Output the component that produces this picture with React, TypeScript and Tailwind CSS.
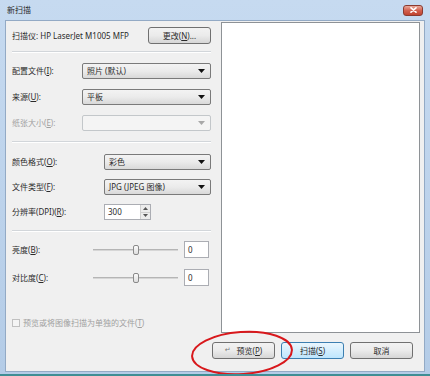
import React from 'react';

const font = "font-['Noto_Sans','Noto_Sans_CJK_SC',sans-serif]";

const Key: React.FC<{ k: string }> = ({ k }) => (
  <>
    (<span className="underline">{k}</span>)
  </>
);

const Arrow: React.FC<{ disabled?: boolean }> = ({ disabled }) => (
  <svg width="7" height="4" viewBox="0 0 7 4" className="shrink-0">
    <path d="M0 0 H7 L3.5 4 Z" fill={disabled ? '#a8a8a8' : '#111'} />
  </svg>
);

const Select: React.FC<{ value?: string; disabled?: boolean }> = ({ value, disabled }) => (
  <div
    className={`flex-1 h-[16px] rounded-[2px] border flex items-center justify-between pl-[4px] pr-[5px] ${
      disabled
        ? 'border-[#c3c7ca] bg-[#f4f4f4]'
        : 'border-[#7a7a7a] bg-linear-to-b from-[#f3f3f3] via-[#ebebeb] to-[#d9d9d9]'
    }`}
  >
    <span className="leading-none">{value}</span>
    <Arrow disabled={disabled} />
  </div>
);

const Button: React.FC<{ children: React.ReactNode; focused?: boolean; className?: string }> = ({
  children,
  focused,
  className = '',
}) => (
  <div
    className={`h-[17px] rounded-[3px] border flex items-center justify-center leading-none ${
      focused
        ? 'border-[#3c7fb1] bg-linear-to-b from-[#eaf6fd] to-[#bee6fd]'
        : 'border-[#707070] bg-linear-to-b from-[#f2f2f2] via-[#ebebeb] to-[#d6d6d6]'
    } ${className}`}
  >
    {children}
  </div>
);

const Slider: React.FC = () => (
  <div className="relative w-[85px] h-[12px] flex items-center">
    <div className="w-full h-[2px] bg-[#d6d6d6] border-t border-[#b5b5b5]" />
    <div className="absolute left-[40px] top-[1px] w-[6px] h-[10px] rounded-[2px] border border-[#8a8a8a] bg-linear-to-b from-[#fbfbfb] to-[#dedede]" />
  </div>
);

const Sep: React.FC<{ className?: string }> = ({ className = '' }) => (
  <div className={`h-[2px] border-t border-[#d2d6da] border-b-white border-b ${className}`} />
);

export default function App() {
  return (
    <div
      className={`relative w-[430px] h-[376px] overflow-hidden flex flex-col bg-linear-to-b from-[#c6daf0] to-[#b4cce7] border-b-2 border-[#3f8e94] text-[8px] text-[#2b2b2b] ${font}`}
    >
      {/* title bar */}
      <div className="h-[20px] shrink-0 flex items-center justify-between pl-[7px] pr-[7px]">
        <span className="leading-none text-[8px]">新扫描</span>
        <div className="w-[20px] h-[11px] rounded-[3px] border border-[#8a3a30] bg-linear-to-b from-[#e9a99b] via-[#d2604f] to-[#c0432f] flex items-center justify-center">
          <svg width="7" height="6" viewBox="0 0 7 6">
            <path d="M1 0.8 L6 5.2 M6 0.8 L1 5.2" stroke="#fff" strokeWidth="1.6" strokeLinecap="round" />
          </svg>
        </div>
      </div>

      {/* client area */}
      <div className="flex-1 mx-[5px] mb-[2px] bg-[#f0f0f0] border border-[#93aac5] flex flex-col">
        <div className="flex">
          {/* settings column */}
          <div className="w-[215px] shrink-0 pl-[6px] pr-[10px] flex flex-col">
            <div className="mt-[7px] h-[15px] flex items-center justify-between">
              <span className="leading-none">扫描仪: HP LaserJet M1005 MFP</span>
              <Button className="w-[63px]">
                更改(<span className="underline">N</span>)...
              </Button>
            </div>

            <Sep className="mt-[8px]" />

            <div className="mt-[10px] flex items-center">
              <span className="w-[70px] leading-none">配置文件<Key k="I" />:</span>
              <Select value="照片 (默认)" />
            </div>
            <div className="mt-[10px] flex items-center">
              <span className="w-[70px] leading-none">来源<Key k="U" />:</span>
              <Select value="平板" />
            </div>
            <div className="mt-[10px] flex items-center">
              <span className="w-[70px] leading-none text-[#a0a0a0]">纸张大小<Key k="E" />:</span>
              <Select disabled />
            </div>

            <Sep className="mt-[10px]" />

            <div className="mt-[11px] flex items-center">
              <span className="w-[92px] leading-none">颜色格式<Key k="O" />:</span>
              <Select value="彩色" />
            </div>
            <div className="mt-[9px] flex items-center">
              <span className="w-[92px] leading-none">文件类型<Key k="F" />:</span>
              <Select value="JPG (JPEG 图像)" />
            </div>
            <div className="mt-[9px] flex items-center">
              <span className="w-[92px] leading-none">分辨率(DPI)<Key k="R" />:</span>
              <div className="w-[47px] h-[16px] flex border border-[#abadb3] bg-white">
                <div className="flex-1 flex items-center pl-[3px] leading-none">300</div>
                <div className="w-[10px] flex flex-col border-l border-[#d0d0d0] bg-[#ececec]">
                  <div className="flex-1 flex items-center justify-center border-b border-[#d0d0d0]">
                    <svg width="5" height="3" viewBox="0 0 5 3">
                      <path d="M0 3 H5 L2.5 0 Z" fill="#555" />
                    </svg>
                  </div>
                  <div className="flex-1 flex items-center justify-center">
                    <svg width="5" height="3" viewBox="0 0 5 3">
                      <path d="M0 0 H5 L2.5 3 Z" fill="#555" />
                    </svg>
                  </div>
                </div>
              </div>
            </div>

            <Sep className="mt-[10px]" />

            <div className="mt-[9px] h-[17px] flex items-center">
              <span className="w-[81px] leading-none">亮度<Key k="B" />:</span>
              <Slider />
              <div className="ml-[6px] w-[25px] h-[17px] border border-[#abadb3] bg-white flex items-center pl-[3px] leading-none">0</div>
            </div>
            <div className="mt-[11px] h-[17px] flex items-center">
              <span className="w-[81px] leading-none">对比度<Key k="C" />:</span>
              <Slider />
              <div className="ml-[6px] w-[25px] h-[17px] border border-[#abadb3] bg-white flex items-center pl-[3px] leading-none">0</div>
            </div>

            <div className="mt-[33px] flex items-center gap-[3px] text-[#a0a0a0]">
              <div className="w-[8px] h-[8px] border border-[#c0c0c0] bg-[#f4f4f4]" />
              <span className="leading-none">
                预览或将图像扫描为单独的文件<Key k="T" />
              </span>
            </div>
          </div>

          {/* preview panel */}
          <div className="mt-[1px] mr-[4px] flex-1 h-[311px] bg-white border border-[#8e9296]" />
        </div>

        {/* bottom buttons */}
        <div className="mt-[9px] flex justify-end gap-[6px] pr-[11px]">
          <Button className="w-[63px] gap-[6px]">
            <span className="text-[#777] font-['DejaVu_Sans',sans-serif] text-[7px]">↵</span>
            <span>
              预览<Key k="P" />
            </span>
          </Button>
          <Button focused className="w-[63px]">
            扫描<Key k="S" />
          </Button>
          <Button className="w-[63px]">取消</Button>
        </div>
      </div>

      {/* red annotation ellipse */}
      <svg className="absolute left-0 top-0 pointer-events-none" width="430" height="376">
        <ellipse
          cx="242"
          cy="353"
          rx="50"
          ry="21"
          fill="none"
          stroke="#d8181c"
          strokeWidth="2"
          transform="rotate(-4 242 353)"
        />
      </svg>
    </div>
  );
}
